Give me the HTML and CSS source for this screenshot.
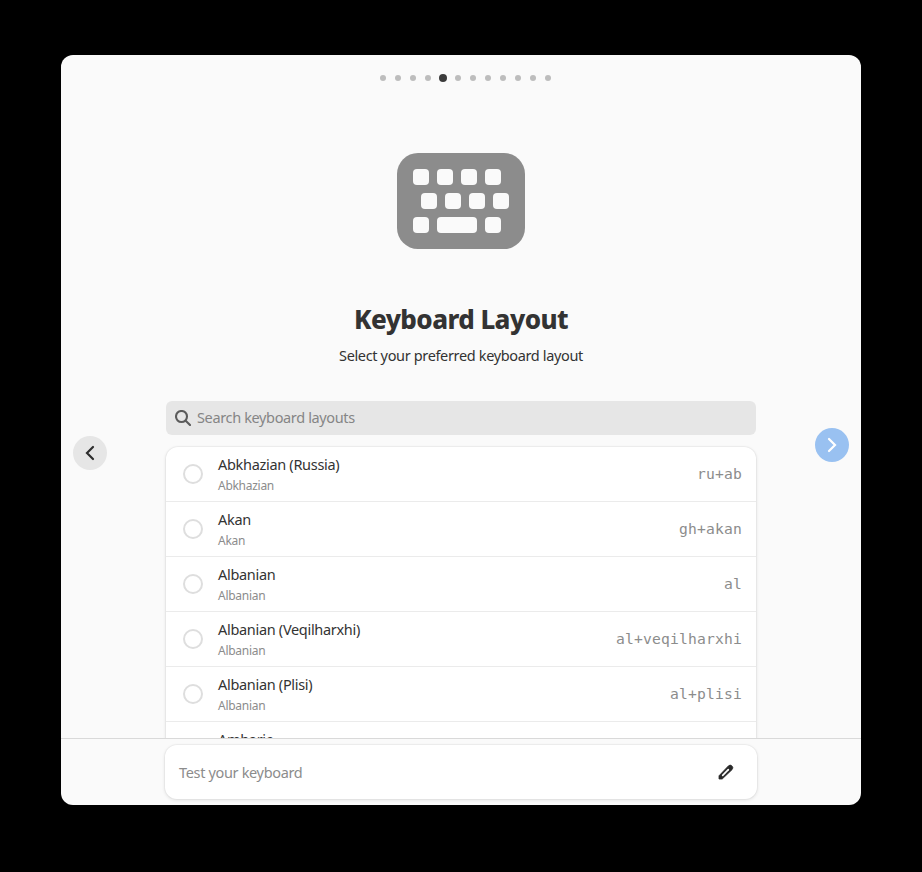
FILE: index.html
```html
<!DOCTYPE html>
<html lang="en">
<head>
<meta charset="utf-8">
<title>Keyboard Layout</title>
<link rel="stylesheet" href="styles.css">
</head>
<body>
<main class="window">
  <nav class="dots"><i></i><i></i><i></i><i></i><i class="current"></i><i></i><i></i><i></i><i></i><i></i><i></i><i></i></nav>
  <div class="page">
    <button class="nav back" aria-label="Back"><svg width="16" height="16" viewBox="0 0 16 16"><path d="M11 2 5 8l6 6" fill="none" stroke="#2e2e2e" stroke-width="2.2" stroke-linecap="round" stroke-linejoin="miter"/></svg></button>
    <section class="content">
      <svg class="hero" width="128" height="96" viewBox="0 0 128 96">
        <rect width="128" height="96" rx="21" fill="#8c8c8c"/>
        <g fill="#fafafa">
          <rect x="16" y="16" width="16" height="16" rx="4"/><rect x="40" y="16" width="16" height="16" rx="4"/><rect x="64" y="16" width="16" height="16" rx="4"/><rect x="88" y="16" width="16" height="16" rx="4"/>
          <rect x="24" y="40" width="16" height="16" rx="4"/><rect x="48" y="40" width="16" height="16" rx="4"/><rect x="72" y="40" width="16" height="16" rx="4"/><rect x="96" y="40" width="16" height="16" rx="4"/>
          <rect x="16" y="64" width="16" height="16" rx="4"/><rect x="40" y="64" width="40" height="16" rx="4"/><rect x="88" y="64" width="16" height="16" rx="4"/>
        </g>
      </svg>
      <h1>Keyboard Layout</h1>
      <p class="subtitle">Select your preferred keyboard layout</p>
      <div class="search"><svg width="16" height="16" viewBox="0 0 16 16" fill="none" stroke="#5b5b5b" stroke-width="2.1" stroke-linecap="round"><circle cx="6.5" cy="6.5" r="5.5"/><path d="m10.700 10.700 4.300 4.300"/></svg><span>Search keyboard layouts</span></div>
      <div class="list">
        <div class="row"><i class="radio"></i><div class="labels"><b>Abkhazian (Russia)</b><small>Abkhazian</small></div><code>ru+ab</code></div>
        <div class="row"><i class="radio"></i><div class="labels"><b>Akan</b><small>Akan</small></div><code>gh+akan</code></div>
        <div class="row"><i class="radio"></i><div class="labels"><b>Albanian</b><small>Albanian</small></div><code>al</code></div>
        <div class="row"><i class="radio"></i><div class="labels"><b>Albanian (Veqilharxhi)</b><small>Albanian</small></div><code>al+veqilharxhi</code></div>
        <div class="row"><i class="radio"></i><div class="labels"><b>Albanian (Plisi)</b><small>Albanian</small></div><code>al+plisi</code></div>
        <div class="row"><i class="radio"></i><div class="labels"><b>Amharic</b></div></div>
      </div>
    </section>
    <button class="nav next" aria-label="Next"><svg width="16" height="16" viewBox="0 0 16 16"><path d="m5 2 6 6-6 6" fill="none" stroke="#fff" stroke-width="2.2" stroke-linecap="round" stroke-linejoin="miter"/></svg></button>
  </div>
  <footer>
    <div class="entry"><span>Test your keyboard</span><svg width="16" height="16" viewBox="0 0 16 16"><path d="M1 15v-3.200L10.300 2a2.600 2.600 0 0 1 3.700 3.700L4.200 15z" fill="#2a2a2a" stroke="#2a2a2a" stroke-width=".8" stroke-linejoin="round"/><path d="m4.700 11.300 5.600-5.600" stroke="#fff" stroke-width="1.700" stroke-linecap="round"/></svg></div>
  </footer>
</main>
</body>
</html>
```
FILE: styles.css
```css
* { box-sizing: border-box; }
body { margin: 0; height: 872px; overflow: hidden; background: #000; color: #333; font: 15px "Noto Sans", sans-serif; padding: 55px 61px; }
.window { width: 800px; height: 750px; border-radius: 12px; background: #fafafa; overflow: hidden; display: flex; flex-direction: column; }
.dots { height: 46px; flex: none; display: flex; justify-content: center; align-items: center; gap: 9px; padding-left: 8px; }
.dots i { width: 6px; height: 6px; border-radius: 50%; background: #bdbdbd; }
.dots .current { width: 8px; height: 8px; margin: 0 -1px; background: #3b3b3b; }
.page { height: 637px; flex: none; display: flex; justify-content: space-between; padding: 0 12px; overflow: hidden; }
.nav { width: 34px; height: 34px; border: 0; padding: 0; border-radius: 50%; display: grid; place-items: center; }
.back { margin-top: 335px; background: #e6e6e6; }
.next { margin-top: 327px; background: #99c1f1; }
.content { width: 592px; display: flex; flex-direction: column; align-items: center; }
.hero { margin-top: 52px; flex: none; }
h1 { margin: 50px 0 0; font-size: 26px; line-height: 40px; font-weight: 800; white-space: nowrap; letter-spacing: -0.58px; }
.subtitle { margin: 6px 0 0; line-height: 20px; white-space: nowrap; font-size: 14.500px; letter-spacing: -0.35px; }
.search { width: 590px; height: 34px; flex: none; margin-top: 36px; border-radius: 6px; background: #e6e6e6; display: flex; align-items: center; gap: 6px; padding: 0 9px; color: #858585; font-size: 14.500px; letter-spacing: -0.36px; }
.search span { padding-bottom: 2px; }
.entry span { padding-bottom: 1px; }
.list { width: 590px; flex: none; margin-top: 12px; background: #fff; border-radius: 12px 12px 0 0; box-shadow: 0 0 0 1px #00000008, 0 1px 3px 1px #00000012; }
.row { height: 55px; display: flex; align-items: center; padding: 0 14px 0 17px; border-bottom: 1px solid #ebebeb; }
.radio { width: 20px; height: 20px; border: 2px solid #dedede; border-radius: 50%; margin-right: 15px; }
.labels { flex: 1; display: flex; flex-direction: column; height: 55px; padding-top: 7px; }
.labels b { font-weight: 400; font-size: 14.500px; line-height: 20px; letter-spacing: -0.31px; }
.labels small { font-size: 12px; line-height: 24px; letter-spacing: -0.28px; color: #8c8c8c; }
code { font: 14.667px "DejaVu Sans Mono", monospace; letter-spacing: 0.17px; color: #8c8c8c; padding-bottom: 2px; }
footer { height: 67px; border-top: 1px solid #d9d9d9; padding: 6px 104px; }
.entry { height: 54px; background: #fff; border-radius: 12px; box-shadow: 0 0 0 1px #00000008, 0 1px 3px 1px #00000012; display: flex; justify-content: space-between; align-items: center; padding: 0 23px 0 14px; color: #8c8c8c; font-size: 14.500px; letter-spacing: -0.34px; }
```
